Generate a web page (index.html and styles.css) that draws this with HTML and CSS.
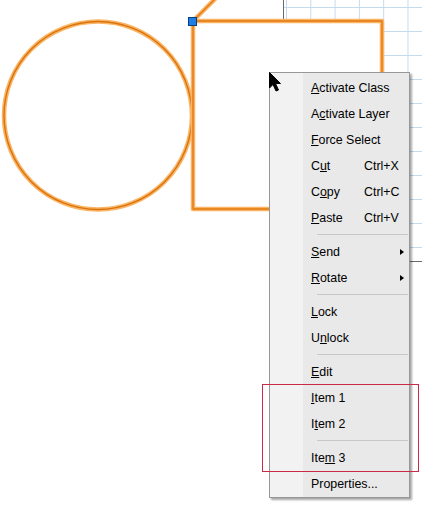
FILE: index.html
```html
<!DOCTYPE html>
<html>
<head>
<meta charset="utf-8">
<link rel="stylesheet" href="styles.css">
</head>
<body>
<div class="canvas">
  <div class="grid"></div>
  <svg class="shapes" width="422" height="509" viewBox="0 0 422 509">
    <g fill="none" stroke-linejoin="round">
      <line x1="193" y1="21" x2="216" y2="-2" stroke="#fbb463" stroke-width="4.5"/>
      <line x1="193" y1="21" x2="216" y2="-2" stroke="#e27a12" stroke-width="1.4"/>
      <circle cx="98" cy="115.5" r="94" stroke="#fbb463" stroke-width="4.5"/>
      <circle cx="98" cy="115.5" r="94" stroke="#d8730e" stroke-width="1.4"/>
      <rect x="193" y="21" width="189" height="188" fill="#fff" stroke="#fbb463" stroke-width="4.5"/>
      <rect x="193" y="21" width="189" height="188" stroke="#e27a12" stroke-width="1.4"/>
    </g>
    <rect x="188.5" y="17.5" width="8" height="8" fill="#1b7fe6" stroke="#0d3f80" stroke-width="1"/>
  </svg>
  <div class="menu">
    <div class="item"><span class="label"><u>A</u>ctivate Class</span></div>
    <div class="item"><span class="label">A<u>c</u>tivate Layer</span></div>
    <div class="item"><span class="label"><u>F</u>orce Select</span></div>
    <div class="item"><span class="label">C<u>u</u>t</span><span class="key">Ctrl+X</span></div>
    <div class="item"><span class="label">C<u>o</u>py</span><span class="key">Ctrl+C</span></div>
    <div class="item"><span class="label"><u>P</u>aste</span><span class="key">Ctrl+V</span></div>
    <div class="sep"></div>
    <div class="item"><span class="label"><u>S</u>end</span><span class="arrow"></span></div>
    <div class="item"><span class="label"><u>R</u>otate</span><span class="arrow"></span></div>
    <div class="sep"></div>
    <div class="item"><span class="label"><u>L</u>ock</span></div>
    <div class="item"><span class="label">U<u>n</u>lock</span></div>
    <div class="sep"></div>
    <div class="item"><span class="label"><u>E</u>dit</span></div>
    <div class="item"><span class="label"><u>I</u>tem 1</span></div>
    <div class="item"><span class="label">I<u>t</u>em 2</span></div>
    <div class="sep"></div>
    <div class="item"><span class="label">Ite<u>m</u> 3</span></div>
    <div class="item"><span class="label">Properties...</span></div>
  </div>
  <div class="highlight"></div>
  <svg class="cursor" width="14" height="22" viewBox="0 0 14 22">
    <polygon points="0.5,0.5 0.5,16 4,12.5 7,19 9.5,18 6.5,11.5 11.5,11.5" fill="#000" stroke="#000" stroke-width="1" stroke-linejoin="miter"/>
  </svg>
</div>
</body>
</html>
```
FILE: styles.css
```css
html, body {
  margin: 0;
  padding: 0;
  background: #fff;
}
.canvas {
  position: relative;
  width: 422px;
  height: 509px;
  overflow: hidden;
  font-family: "Liberation Sans", Arial, sans-serif;
  font-size: 12.4px;
  color: #000;
}
.grid {
  position: absolute;
  left: 283px;
  top: 0;
  width: 140px;
  height: 261px;
  border-left: 1px solid #6a6a6a;
  border-bottom: 1px solid #6a6a6a;
  background-color: #fff;
  background-image:
    linear-gradient(to right, #c4daee 1px, transparent 1px),
    linear-gradient(to bottom, #c4daee 1px, transparent 1px);
  background-size: 24.3px 24px;
  background-position: 2px 7px;
}
.shapes {
  position: absolute;
  left: 0;
  top: 0;
}
.menu {
  position: absolute;
  left: 269px;
  top: 72px;
  width: 139px;
  padding: 1px 0;
  border: 1px solid #979797;
  background: linear-gradient(to right, #f2f2f2 0, #f2f2f2 33px, #e9e9e9 33px);
  box-shadow: 2px 2px 2px rgba(0, 0, 0, 0.35);
  display: flex;
  flex-direction: column;
}
.item {
  height: 26px;
  box-sizing: border-box;
  padding-top: 2px;
  display: flex;
  align-items: center;
  padding-left: 41px;
  padding-right: 5px;
}
.label {
  width: 53px;
  flex: none;
  white-space: nowrap;
}
.key {
  white-space: nowrap;
}
.arrow {
  margin-left: auto;
  width: 0;
  height: 0;
  border-top: 3.5px solid transparent;
  border-bottom: 3.5px solid transparent;
  border-left: 4px solid #000;
}
.sep {
  height: 8px;
  margin-left: 47px;
  margin-right: 1px;
  display: flex;
  align-items: center;
}
.sep::before {
  content: "";
  display: block;
  width: 100%;
  height: 1px;
  background: #c8c8c8;
}
.highlight {
  position: absolute;
  left: 262px;
  top: 384px;
  width: 155px;
  height: 86px;
  border: 1px solid #cc2a44;
}
.cursor {
  position: absolute;
  left: 269px;
  top: 72px;
}
```
